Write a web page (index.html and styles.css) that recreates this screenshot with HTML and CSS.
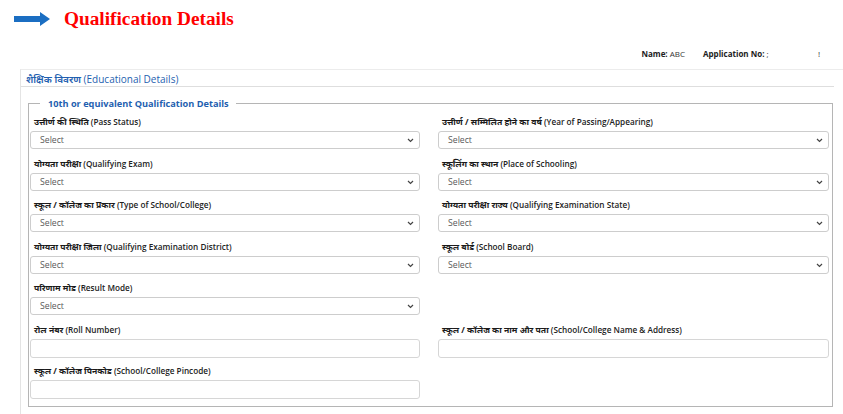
FILE: index.html
```html
<!DOCTYPE html>
<html lang="hi">
<head>
<meta charset="utf-8">
<title>Qualification Details</title>
<link rel="stylesheet" href="styles.css">
</head>
<body>
<div class="page">
  <header class="title-bar">
    <svg class="arrow" width="36" height="14" viewBox="0 0 36 14"><path d="M0 4 H26 V0 L36 7 L26 14 V10 H0 Z" fill="#1b6ec2"/></svg>
    <h1 class="title">Qualification Details</h1>
  </header>
  <div class="info-row">
    <span class="info"><b>Name:</b> ABC</span>
    <span class="info app"><b>Application No:</b> ;</span>
    <span class="info bang">!</span>
  </div>
  <section class="card">
    <div class="card-head"><span class="hi-head">शैक्षिक विवरण</span> (Educational Details)</div>
    <fieldset class="qual">
      <legend>10th or equivalent Qualification Details</legend>
      <div class="grid">
        <div class="field">
          <label><span class="hi">उत्तीर्ण की स्थिति</span> (Pass Status)</label>
          <div class="select"><span>Select</span><svg class="chev" width="7" height="5" viewBox="0 0 7 5"><path d="M1 1 L3.5 3.5 L6 1" fill="none" stroke="#444" stroke-width="1.2"/></svg></div>
        </div>
        <div class="field">
          <label><span class="hi">उत्तीर्ण / सम्मिलित होने का वर्ष</span> (Year of Passing/Appearing)</label>
          <div class="select"><span>Select</span><svg class="chev" width="7" height="5" viewBox="0 0 7 5"><path d="M1 1 L3.5 3.5 L6 1" fill="none" stroke="#444" stroke-width="1.2"/></svg></div>
        </div>
        <div class="field">
          <label><span class="hi">योग्यता परीक्षा</span> (Qualifying Exam)</label>
          <div class="select"><span>Select</span><svg class="chev" width="7" height="5" viewBox="0 0 7 5"><path d="M1 1 L3.5 3.5 L6 1" fill="none" stroke="#444" stroke-width="1.2"/></svg></div>
        </div>
        <div class="field">
          <label><span class="hi">स्कूलिंग का स्थान</span> (Place of Schooling)</label>
          <div class="select"><span>Select</span><svg class="chev" width="7" height="5" viewBox="0 0 7 5"><path d="M1 1 L3.5 3.5 L6 1" fill="none" stroke="#444" stroke-width="1.2"/></svg></div>
        </div>
        <div class="field">
          <label><span class="hi">स्कूल / कॉलेज का प्रकार</span> (Type of School/College)</label>
          <div class="select"><span>Select</span><svg class="chev" width="7" height="5" viewBox="0 0 7 5"><path d="M1 1 L3.5 3.5 L6 1" fill="none" stroke="#444" stroke-width="1.2"/></svg></div>
        </div>
        <div class="field">
          <label><span class="hi">योग्यता परीक्षा राज्य</span> (Qualifying Examination State)</label>
          <div class="select"><span>Select</span><svg class="chev" width="7" height="5" viewBox="0 0 7 5"><path d="M1 1 L3.5 3.5 L6 1" fill="none" stroke="#444" stroke-width="1.2"/></svg></div>
        </div>
        <div class="field">
          <label><span class="hi">योग्यता परीक्षा जिला</span> (Qualifying Examination District)</label>
          <div class="select"><span>Select</span><svg class="chev" width="7" height="5" viewBox="0 0 7 5"><path d="M1 1 L3.5 3.5 L6 1" fill="none" stroke="#444" stroke-width="1.2"/></svg></div>
        </div>
        <div class="field">
          <label><span class="hi">स्कूल बोर्ड</span> (School Board)</label>
          <div class="select"><span>Select</span><svg class="chev" width="7" height="5" viewBox="0 0 7 5"><path d="M1 1 L3.5 3.5 L6 1" fill="none" stroke="#444" stroke-width="1.2"/></svg></div>
        </div>
        <div class="field">
          <label><span class="hi">परिणाम मोड</span> (Result Mode)</label>
          <div class="select"><span>Select</span><svg class="chev" width="7" height="5" viewBox="0 0 7 5"><path d="M1 1 L3.5 3.5 L6 1" fill="none" stroke="#444" stroke-width="1.2"/></svg></div>
        </div>
        <div class="field"></div>
        <div class="field">
          <label><span class="hi">रोल नंबर</span> (Roll Number)</label>
          <input class="input" type="text">
        </div>
        <div class="field">
          <label><span class="hi">स्कूल / कॉलेज का नाम और पता</span> (School/College Name &amp; Address)</label>
          <input class="input" type="text">
        </div>
        <div class="field">
          <label><span class="hi">स्कूल / कॉलेज पिनकोड</span> (School/College Pincode)</label>
          <input class="input" type="text">
        </div>
      </div>
    </fieldset>
  </section>
</div>
</body>
</html>
```

FILE: styles.css
```css
* { box-sizing: border-box; }
body {
  margin: 0;
  background: #fff;
  font-family: "Open Sans", "Noto Sans", "Noto Sans Devanagari", "Lohit Devanagari", sans-serif;
  color: #222;
}
.page { width: 843px; }
.title-bar {
  display: flex;
  align-items: center;
  padding: 8px 0 0 14px;
  height: 30px;
}
.arrow { flex: none; }
.title {
  margin: 0 0 0 14px;
  font-family: "Liberation Serif", serif;
  font-weight: bold;
  font-size: 19.3px;
  color: #ff0000;
  line-height: 20px;
}
.info-row {
  display: flex;
  justify-content: flex-end;
  align-items: center;
  height: 14px;
  margin-top: 16px;
  padding-right: 22px;
  font-size: 8px;
  color: #333;
}
.info b { font-weight: 700; color: #222; }
.info.app { margin-left: 18px; width: 115px; }
.info.bang { width: 3px; }
.card {
  margin: 9px 0 0 20px;
  border-top: 1px solid #ececec;
  border-left: 1px solid #e4e4e4;
  padding-bottom: 8px;
}
.card-head {
  width: 813px;
  height: 17px;
  padding-left: 5px;
  line-height: 18px;
  font-size: 10px;
  color: #1f5fb0;
  border-bottom: 1px solid #dedede;
}
.hi-head { font-weight: 600; }
.qual {
  margin: 10px 0 0 7px;
  width: 805px;
  border: 1px solid #b5b5b5;
  padding: 6px 3px 4px 1px;
}
.qual legend {
  margin-left: 10px;
  padding: 0 7px 0 8px;
  font-size: 9.2px;
  font-weight: 700;
  color: #1f5fb0;
}
.grid {
  display: grid;
  grid-template-columns: 390px 391px;
  grid-auto-rows: 37px;
  column-gap: 18px;
  row-gap: 4.5px;
}
.field {
  display: flex;
  flex-direction: column;
}
.field label {
  display: block;
  padding-left: 4px;
  height: 15px;
  line-height: 12px;
  font-size: 8.2px;
  font-weight: 600;
  color: #222;
  white-space: nowrap;
}
.field .hi { font-weight: 700; color: #1a1a1a; font-size: 8.6px; }
.select {
  position: relative;
  height: 18px;
  border: 1px solid #cdcdcd;
  border-radius: 3px;
  display: flex;
  align-items: center;
  padding-left: 9px;
  font-size: 8.7px;
  color: #595959;
}
.chev {
  position: absolute;
  right: 5px;
  top: 6px;
}
.input {
  height: 19px;
  border: 1px solid #d6d6d6;
  border-radius: 3px;
  background: #fff;
  padding: 0 8px;
  font: inherit;
  width: 100%;
}
```
